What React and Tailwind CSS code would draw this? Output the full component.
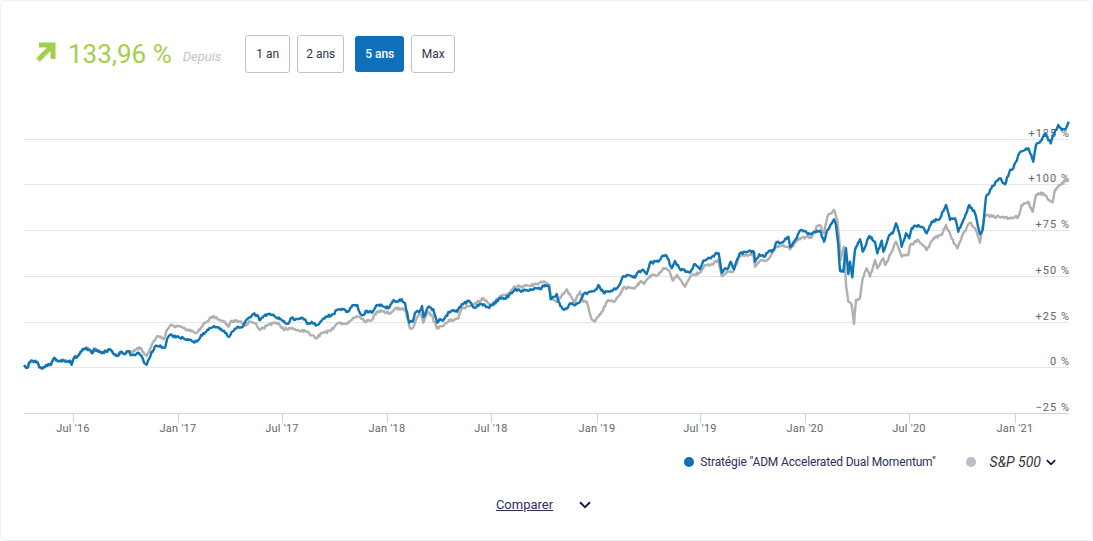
const blueLine = [
  24,367, 28,367.3, 29,362.7, 32.7,361, 37.3,362, 39.3,367.3, 42,368.7, 46,365, 50.7,365, 54,358, 58.3,361.3, 62.7,360, 67.3,361.3, 70,360.7, 71.7,364.7, 74,357.7, 77.3,356.7, 80.7,351.7, 86,347.7, 90,350, 92,353.3, 94,349, 97.3,350, 101.7,353, 106,351, 110.7,350, 116.7,356, 121.7,352, 124,354, 129.3,351.3,
  130.7,355.3, 135,355.3, 138.7,352.7, 142,356.7, 144,362.7, 146.7,364.7, 148.3,360, 151.7,351.7, 156.7,345.7, 162.7,347.3, 165.3,347.3, 167.3,338.3, 170,335, 176.7,336.7, 183.3,338, 193.3,341.7, 196.7,341.7, 203.3,333.3, 208.3,330, 214,326, 220,329.3, 224,330.7, 228.3,336.7,
  232.7,331.3, 238.3,326.7, 243.3,326, 246.7,319.3, 253.3,314.3, 257.3,315, 259.3,320, 265,314.7, 270,314, 276.7,317.7, 281.7,320, 285,323.3, 289.3,322.3, 291.7,317.7, 295,320, 300,318.3, 305,319.3, 307.3,324, 311.7,321.7, 316.7,325, 321.7,320.7, 326.7,316.7, 333.3,314.3, 336.7,310, 343.3,309.3, 348.3,311.7, 353.3,305, 357.3,305, 360,313.3, 363.3,315, 366.7,310.7, 371.7,312.7, 376.7,305, 381.7,305, 388.3,308.3, 392.7,301, 396.7,301.3, 401.7,299.3, 405,303.3, 409.3,322.7, 412.7,321.7, 415,312.7, 420,310.7, 422,306,
  423.5,317, 425,315, 428,307.3, 433.3,309.3, 436,318.3, 437.3,322.7, 440.7,319.3, 444,319.3, 449.3,312, 453.3,310, 457.3,311.7, 461.7,304.3, 469.3,301, 473.3,307.3, 481.7,304, 488.3,307.3, 493.3,305, 500,297.7, 505,298.3, 509.3,295, 515,289.3, 520,290.7, 530,289.3, 540,289, 545,285, 549,286.7, 550.7,299.3, 556.7,294, 558.3,301.7, 563.3,309.3, 566.7,308.7, 570,303.3, 574,305, 580,301.7, 583.3,294.3, 590,291.7, 596.7,289.3, 598.3,285, 603.3,292.3, 610,291.7, 616.7,288.3, 620,284,
  622.7,276.7, 626.7,275, 635,277.7, 638.3,271.7, 643.3,270, 646.7,274, 650,262.7, 658.3,261.7, 661.7,256.7, 666.7,256, 671.7,268.3, 675,261, 680,269.3, 690.7,272, 694,264.3, 700,269.3, 703.3,260.7, 710.7,258.3, 715,254.3, 718.7,253.3, 721.7,272.7, 725,268.3, 727.3,269.3, 730.7,261.7, 734,269.3, 739.3,254, 745,251.7, 748.3,251.7, 754,251.7, 755,261.7, 759.3,254.3, 764,256.7, 768.3,251.7, 774,250, 776,242.7, 783.3,241.7, 788.3,236.7, 790,246.7, 796.7,238.3, 800,230.7, 806.7,232.7, 810,234, 816.7,230.7, 820,230.7,
  824,241.7, 827.3,230, 834,219.3, 836,225, 838.3,245, 840,270.7, 843.3,271.7, 846,248.3, 848.3,274, 850,261.7, 852.3,277.3, 855,250, 860,239.3, 862.7,251.7, 869.3,236, 875,241.7, 877.3,253.3, 881.7,240.7, 883.3,251.7, 889.3,235, 892.7,233.3, 896,223.3, 899.3,233.3, 901.7,246.7, 906,233.3, 909.3,238.3, 911.7,228.3, 918.3,225, 921.7,226.7, 926.7,233.3, 931.7,221.7, 940,218.3, 946,205, 950,220, 955,218.3, 958.3,231.7, 963.3,220, 969.3,205,
  975,213.3, 980,234.3, 982.7,230, 986,196.7, 993.3,185.7, 1000,178.3, 1005,184.3, 1010,170, 1013.3,168.3, 1019.3,153.3, 1025,150, 1028.3,148.3, 1033.3,161.7, 1036,145, 1041.7,140, 1045,133.3, 1050.7,143.3, 1053.3,135, 1058.3,125, 1061.7,130, 1066,128.3, 1068.7,121.7,
]

const grayLine = [
  ...blueLine.slice(0, 60),
  131.7,351.7, 139.3,347.3, 143.3,351.7, 146.7,356, 151.7,345, 157.3,336, 164,339.3, 167.3,329.3, 170.7,325, 183.3,328.3, 193.3,331.7, 196.7,332.7, 205,322.7, 213.3,316, 220,320,
  223.3,321.7, 228.3,326.7, 231.7,320.7, 240,321.7, 245,325, 250,321.7, 255,323.3, 260,330, 266.7,326, 273.3,323.3, 278.3,322.7, 283.3,329.3, 290,328.3, 298.3,330, 306.7,331.7, 316.7,338.3, 321.7,333.3, 330,331, 338.3,323.3, 348.3,323.3, 353.3,317.7, 360,316.7, 365,321.7, 371.7,320, 376.7,311.7, 383.3,311.7, 390,313.3, 395,308.3, 405,309.3, 410,328.3, 413.3,327.3, 416.7,318.3, 420,313.3,
  423.3,322.7, 427.3,311.7, 431.7,315, 436.7,328.3, 441.7,326, 450,320.7, 458.3,318.3, 461.7,308.3, 466.7,306, 473.3,305, 483.3,298.3, 488.3,303.3, 491.7,305, 498.3,298.3, 503.3,295, 508.3,293.3, 515,286.7, 520,286.7, 530,286, 545,281.7, 549.3,285, 550.7,296.7, 557.3,301.7, 566.7,289.3, 574,302.7, 580,291.7, 583.3,301.7, 586.7,301.7, 591.7,319.3, 595,321.7, 601.7,311.7, 608.3,300, 614,301.7, 620,295,
  623.3,287.7, 635,288.3, 640,281.7, 644,284, 650,275.7, 658.3,275, 663.3,268.3, 669.3,270.7, 672.7,280.7, 676.7,275, 685,286.7, 691.7,275, 700,272.7, 705,265, 711.7,264, 718.3,260, 721.7,276, 726.7,271.7, 733.3,271.7, 739.3,256.7, 746.7,255, 753.3,254, 755,266.7, 761.7,260, 768.3,259.3, 775,248.3, 783.3,245, 790,249.3, 796.7,240, 806.7,236.7, 811.7,237.3, 816.7,226, 820,225,
  824,233.3, 827.3,216.7, 834,210, 837.3,220, 839.3,240, 840.7,260, 844,246.7, 846,285, 848.3,301.7, 851.7,305, 854,324, 856,300, 860,298.3, 862.7,278.3, 866.7,268.3, 870,276.7, 875,260, 877.3,268.3, 883.3,258.3, 885,265, 891.7,251.7, 896,241.7, 901.7,256.7, 908.3,255, 910,245, 918.3,240, 926.7,250, 933.3,238.3, 941.7,235, 946,225, 951.7,238.3, 957.3,248.3, 963.3,233.3, 970,222.7, 975,228.3, 980,242.7, 983.3,223.3, 985,215,
  996.7,216.7, 1003.3,216.7, 1010,218.3, 1018.3,216.7, 1021.7,205, 1028.3,201.7, 1032.7,211.7, 1036,195, 1043.3,193.3, 1048.3,200, 1052.7,202.3, 1055,190, 1060,185, 1068.3,178.3,
]

// the real series is daily, so fill in between the traced points with a bit of noise
function toPoints(flat, seed) {
  let s = seed
  const rand = () => {
    s = (s * 16807) % 2147483647
    return s / 2147483647 - 0.5
  }
  const out = []
  for (let i = 0; i < flat.length - 2; i += 2) {
    const [x0, y0, x1, y1] = [flat[i], flat[i + 1], flat[i + 2], flat[i + 3]]
    const steps = Math.max(1, Math.round((x1 - x0) / 1.1))
    out.push(`${x0},${y0}`)
    for (let k = 1; k < steps; k++) {
      const t = k / steps
      out.push(`${(x0 + (x1 - x0) * t).toFixed(1)},${(y0 + (y1 - y0) * t + rand() * 2.6).toFixed(1)}`)
    }
  }
  out.push(`${flat[flat.length - 2]},${flat[flat.length - 1]}`)
  return out.join(' ')
}

const gridLines = [
  { y: 139, label: '+125 %' },
  { y: 184, label: '+100 %' },
  { y: 230, label: '+75 %' },
  { y: 276, label: '+50 %' },
  { y: 322, label: '+25 %' },
  { y: 367, label: '0 %' },
  { y: 413, label: '−25 %' },
]

const ticks = [
  { x: 73, label: "Jul '16" },
  { x: 178, label: "Jan '17" },
  { x: 282, label: "Jul '17" },
  { x: 387, label: "Jan '18" },
  { x: 491, label: "Jul '18" },
  { x: 597, label: "Jan '19" },
  { x: 700, label: "Jul '19" },
  { x: 805, label: "Jan '20" },
  { x: 909, label: "Jul '20" },
  { x: 1015, label: "Jan '21" },
]

const periods = [
  { label: '1 an', width: 'w-[45px]' },
  { label: '2 ans', width: 'w-[47px]' },
  { label: '5 ans', width: 'w-[49px]', active: true },
  { label: 'Max', width: 'w-[44px]' },
]

function Chevron({ className }) {
  return (
    <svg viewBox="0 0 12 8" fill="none" stroke="currentColor" strokeWidth="2" className={className}>
      <path d="M1 1.2 L6 6.2 L11 1.2" />
    </svg>
  )
}

function PerformanceChart() {
  return (
    <svg viewBox="1 100 1091 340" className="block w-[1091px] h-[340px] font-['Roboto',sans-serif]">
      {gridLines.map((g) => (
        <line
          key={g.y}
          x1="24"
          x2="1069"
          y1={g.y + 0.5}
          y2={g.y + 0.5}
          stroke={g.y === 413 ? '#ccd6eb' : '#e6e6e6'}
        />
      ))}
      {gridLines.map((g) => (
        <text key={g.label} x="1070" y={g.y - 2} textAnchor="end" fontSize="11" letterSpacing="1" fill="#666666">
          {g.label}
        </text>
      ))}
      {ticks.map((t) => (
        <g key={t.label}>
          <line x1={t.x + 0.5} x2={t.x + 0.5} y1="413" y2="423" stroke="#ccd6eb" />
          <text x={t.x} y="432" textAnchor="middle" fontSize="11" letterSpacing="0.25" fill="#666666">
            {t.label}
          </text>
        </g>
      ))}
      <polyline points={toPoints(grayLine, 4711)} fill="none" stroke="#b0b0b0" strokeWidth="2.4" strokeLinejoin="round" />
      <polyline points={toPoints(blueLine, 1237)} fill="none" stroke="#0f75b5" strokeWidth="2.4" strokeLinejoin="round" />
    </svg>
  )
}

export default function App() {
  return (
    <div className="w-[1093px] h-[541px] overflow-hidden bg-white border border-[#eceef3] rounded-md font-['Roboto',sans-serif]">
      {/* header */}
      <div className="flex items-center h-[38px] mt-[34px] pl-[35px]">
        <svg viewBox="0 0 20 20" fill="none" stroke="#a4cf4c" strokeWidth="5" className="w-5 h-5 shrink-0 -mt-[5px]">
          <path d="M2 18 L16 4" />
          <path d="M3 3 H17 V17" />
        </svg>
        <span className="ml-[12px] text-[26px] text-[#a4cf4c] whitespace-nowrap">133,96 %</span>
        <span className="ml-[11px] mt-[6px] text-[13px] italic text-[#c2c4cd]">Depuis</span>
        <div className="flex gap-[7px] ml-[24px]">
          {periods.map((p) =>
            p.active ? (
              <button key={p.label} className={`${p.width} ml-1 h-[36px] my-px rounded-[3px] bg-[#0f6fb8] text-white text-[12px] font-medium`}>
                {p.label}
              </button>
            ) : (
              <button key={p.label} className={`${p.width} h-[38px] rounded-[3px] border border-[#c0c2cb] bg-white text-[#33364a] text-[12px]`}>
                {p.label}
              </button>
            )
          )}
        </div>
      </div>

      <div className="mt-[27px]">
        <PerformanceChart />
      </div>

      {/* legend */}
      <div className="flex items-center justify-end h-5 mt-3 pr-[36px]">
        <span className="w-[10px] h-[10px] rounded-full bg-[#0f6fb8]" />
        <span className="ml-[6px] text-[12px] tracking-[-0.15px] text-[#2d3159] whitespace-nowrap">Stratégie "ADM Accelerated Dual Momentum"</span>
        <span className="ml-[30px] w-[10px] h-[10px] rounded-full bg-[#bcbdc8]" />
        <span className="ml-[14px] text-[14px] italic text-[#33343d] whitespace-nowrap">S&amp;P 500</span>
        <Chevron className="ml-[5px] w-[10px] h-[7px] text-[#10132e]" />
      </div>

      <div className="flex items-center justify-center gap-[26px] h-5 mt-[23px] pr-[6px]">
        <a className="text-[13px] underline text-[#2d3159]">Comparer</a>
        <Chevron className="w-3 h-2 text-[#1b1f47]" />
      </div>
    </div>
  )
}
